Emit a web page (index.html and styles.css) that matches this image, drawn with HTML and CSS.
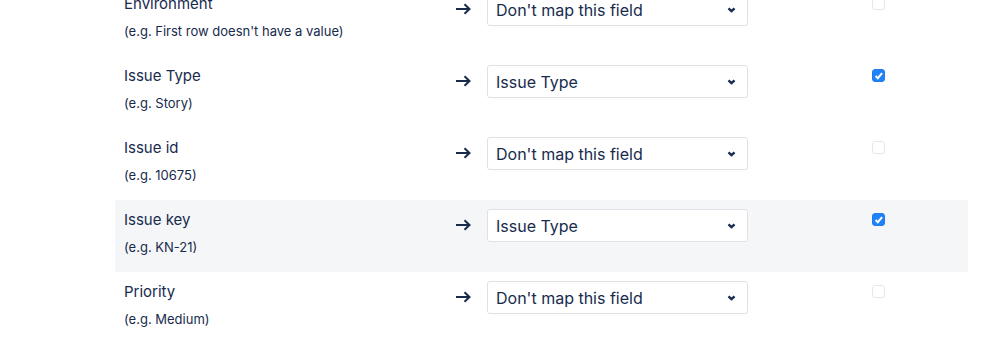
FILE: index.html
```html
<!DOCTYPE html>
<html lang="en">
<head>
  <meta charset="UTF-8">
  <title>Field mapping</title>
  <link rel="stylesheet" href="styles.css">
</head>
<body>
<div class="mapping">

  <div class="row">
    <div class="field">
      <div class="name">Environment</div>
      <div class="hint">(e.g. First row doesn't have a value)</div>
    </div>
    <svg class="arrow" width="16" height="12" viewBox="0 0 16 12"><path d="M1 6H14.5M9.5 1.2L14.5 6L9.5 10.8"/></svg>
    <div class="select"><span>Don't map this field</span><svg class="chev" width="9" height="6" viewBox="0 0 9 6"><path d="M1.5 1.3L4.5 4.2L7.5 1.3"/></svg></div>
    <input type="checkbox" class="check">
  </div>

  <div class="row">
    <div class="field">
      <div class="name">Issue Type</div>
      <div class="hint">(e.g. Story)</div>
    </div>
    <svg class="arrow" width="16" height="12" viewBox="0 0 16 12"><path d="M1 6H14.5M9.5 1.2L14.5 6L9.5 10.8"/></svg>
    <div class="select"><span>Issue Type</span><svg class="chev" width="9" height="6" viewBox="0 0 9 6"><path d="M1.5 1.3L4.5 4.2L7.5 1.3"/></svg></div>
    <input type="checkbox" class="check" checked>
  </div>

  <div class="row">
    <div class="field">
      <div class="name">Issue id</div>
      <div class="hint">(e.g. 10675)</div>
    </div>
    <svg class="arrow" width="16" height="12" viewBox="0 0 16 12"><path d="M1 6H14.5M9.5 1.2L14.5 6L9.5 10.8"/></svg>
    <div class="select"><span>Don't map this field</span><svg class="chev" width="9" height="6" viewBox="0 0 9 6"><path d="M1.5 1.3L4.5 4.2L7.5 1.3"/></svg></div>
    <input type="checkbox" class="check">
  </div>

  <div class="row hover">
    <div class="field">
      <div class="name">Issue key</div>
      <div class="hint">(e.g. KN-21)</div>
    </div>
    <svg class="arrow" width="16" height="12" viewBox="0 0 16 12"><path d="M1 6H14.5M9.5 1.2L14.5 6L9.5 10.8"/></svg>
    <div class="select"><span>Issue Type</span><svg class="chev" width="9" height="6" viewBox="0 0 9 6"><path d="M1.5 1.3L4.5 4.2L7.5 1.3"/></svg></div>
    <input type="checkbox" class="check" checked>
  </div>

  <div class="row">
    <div class="field">
      <div class="name">Priority</div>
      <div class="hint">(e.g. Medium)</div>
    </div>
    <svg class="arrow" width="16" height="12" viewBox="0 0 16 12"><path d="M1 6H14.5M9.5 1.2L14.5 6L9.5 10.8"/></svg>
    <div class="select"><span>Don't map this field</span><svg class="chev" width="9" height="6" viewBox="0 0 9 6"><path d="M1.5 1.3L4.5 4.2L7.5 1.3"/></svg></div>
    <input type="checkbox" class="check">
  </div>

</div>
</body>
</html>
```

FILE: styles.css
```css
body { margin: 0; background: #fff; color: #172b4d; font-family: Inter, "Noto Sans", sans-serif; overflow: hidden; }
.mapping { width: 853px; margin: -16px 0 0 115px; }
.row { display: grid; grid-template-columns: 331px 32px 261px 124px 13px; align-items: start; height: 72px; padding: 9px 0 0 9px; box-sizing: border-box; }
.row.hover { background: #f5f6f8; }
.name { font-size: 15px; line-height: 20px; margin-top: 1px; }
.hint { font-size: 13px; line-height: 18px; margin-top: 8px; }
.arrow { margin-top: 10px; fill: none; stroke: #172b4d; stroke-width: 2; }
.select { display: flex; align-items: center; justify-content: space-between; height: 33px; box-sizing: border-box; padding: 0 11px 0 8px; background: #fff; border: 1px solid #dfe1e6; border-radius: 3px; font-size: 16px; }
.chev { fill: none; stroke: #172b4d; stroke-width: 2.4; }
.check { grid-column: 5; appearance: none; -webkit-appearance: none; margin: 4px 0 0 0; width: 13px; height: 13px; border: 1px solid #e6e7e9; border-radius: 3px; background: #fff; }
.check:checked { border-color: #1f7cf2; background: #2181f7 url("data:image/svg+xml,%3Csvg xmlns='http://www.w3.org/2000/svg' viewBox='0 0 12 12'%3E%3Cpath d='M3 6.2L5.1 8.4L9.2 3.4' fill='none' stroke='%23fff' stroke-width='1.9'/%3E%3C/svg%3E") center / 12px no-repeat; }
```
